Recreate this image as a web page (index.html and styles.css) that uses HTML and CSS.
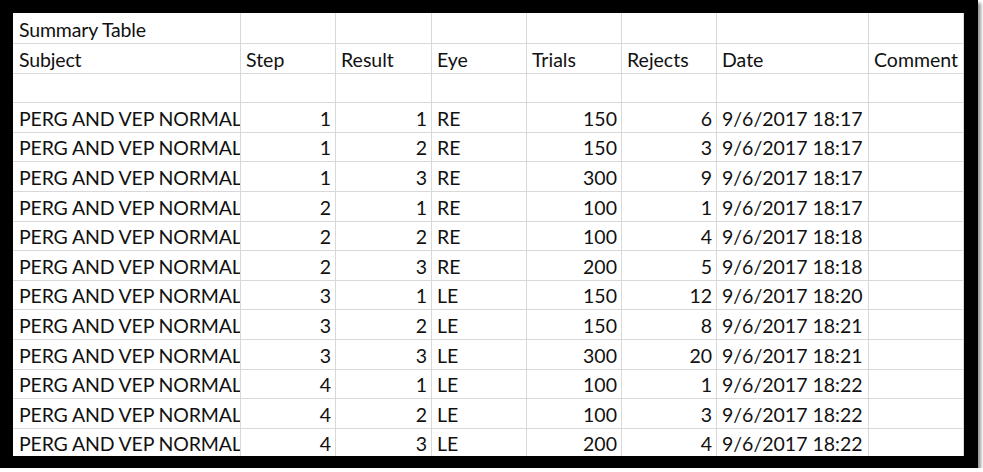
FILE: index.html
```html
<!DOCTYPE html>
<html>
<head>
<meta charset="utf-8">
<link rel="stylesheet" href="styles.css">
</head>
<body>
<div class="frame">
  <div class="sheet">
    <div class="c a">Summary Table</div><div class="c"></div><div class="c"></div><div class="c"></div><div class="c"></div><div class="c"></div><div class="c"></div><div class="c"></div>
    <div class="c a">Subject</div><div class="c">Step</div><div class="c">Result</div><div class="c">Eye</div><div class="c">Trials</div><div class="c">Rejects</div><div class="c">Date</div><div class="c">Comment</div>
    <div class="c a"></div><div class="c"></div><div class="c"></div><div class="c"></div><div class="c"></div><div class="c"></div><div class="c"></div><div class="c"></div>

    <div class="c a">PERG AND VEP NORMAL</div><div class="c n">1</div><div class="c n">1</div><div class="c">RE</div><div class="c n">150</div><div class="c n">6</div><div class="c">9/6/2017 18:17</div><div class="c"></div>
    <div class="c a">PERG AND VEP NORMAL</div><div class="c n">1</div><div class="c n">2</div><div class="c">RE</div><div class="c n">150</div><div class="c n">3</div><div class="c">9/6/2017 18:17</div><div class="c"></div>
    <div class="c a">PERG AND VEP NORMAL</div><div class="c n">1</div><div class="c n">3</div><div class="c">RE</div><div class="c n">300</div><div class="c n">9</div><div class="c">9/6/2017 18:17</div><div class="c"></div>
    <div class="c a">PERG AND VEP NORMAL</div><div class="c n">2</div><div class="c n">1</div><div class="c">RE</div><div class="c n">100</div><div class="c n">1</div><div class="c">9/6/2017 18:17</div><div class="c"></div>
    <div class="c a">PERG AND VEP NORMAL</div><div class="c n">2</div><div class="c n">2</div><div class="c">RE</div><div class="c n">100</div><div class="c n">4</div><div class="c">9/6/2017 18:18</div><div class="c"></div>
    <div class="c a">PERG AND VEP NORMAL</div><div class="c n">2</div><div class="c n">3</div><div class="c">RE</div><div class="c n">200</div><div class="c n">5</div><div class="c">9/6/2017 18:18</div><div class="c"></div>
    <div class="c a">PERG AND VEP NORMAL</div><div class="c n">3</div><div class="c n">1</div><div class="c">LE</div><div class="c n">150</div><div class="c n">12</div><div class="c">9/6/2017 18:20</div><div class="c"></div>
    <div class="c a">PERG AND VEP NORMAL</div><div class="c n">3</div><div class="c n">2</div><div class="c">LE</div><div class="c n">150</div><div class="c n">8</div><div class="c">9/6/2017 18:21</div><div class="c"></div>
    <div class="c a">PERG AND VEP NORMAL</div><div class="c n">3</div><div class="c n">3</div><div class="c">LE</div><div class="c n">300</div><div class="c n">20</div><div class="c">9/6/2017 18:21</div><div class="c"></div>
    <div class="c a">PERG AND VEP NORMAL</div><div class="c n">4</div><div class="c n">1</div><div class="c">LE</div><div class="c n">100</div><div class="c n">1</div><div class="c">9/6/2017 18:22</div><div class="c"></div>
    <div class="c a">PERG AND VEP NORMAL</div><div class="c n">4</div><div class="c n">2</div><div class="c">LE</div><div class="c n">100</div><div class="c n">3</div><div class="c">9/6/2017 18:22</div><div class="c"></div>
    <div class="c a">PERG AND VEP NORMAL</div><div class="c n">4</div><div class="c n">3</div><div class="c">LE</div><div class="c n">200</div><div class="c n">4</div><div class="c">9/6/2017 18:22</div><div class="c"></div>
  </div>
</div>
</body>
</html>
```

FILE: styles.css
```css
html, body {
  margin: 0;
  padding: 0;
  background: #ffffff;
}

.frame {
  width: 951px;
  height: 443px;
  border-style: solid;
  border-color: #000000;
  border-width: 13px 14px 12px 13px;
  background: #ffffff;
  overflow: hidden;
  box-shadow: 3px 3px 3px #9a9a9a;
}

.sheet {
  display: grid;
  grid-template-columns: 228px 95px 96px 95px 95px 95px 152px 95px;
  grid-template-rows: 31px 30px 29px 30px 29px 30px 30px 29px 30px 29px 30px 30px 29px 30px 29px;
  font-family: Lato, "Open Sans", sans-serif;
  font-size: 19.5px;
  color: #111111;
}

.c {
  box-sizing: border-box;
  border-right: 1px solid #d9d9d9;
  border-bottom: 1px solid #d9d9d9;
  display: flex;
  align-items: flex-end;
  padding: 0 4px 3px 5px;
  line-height: 20px;
  white-space: nowrap;
  overflow: hidden;
}

.c.a {
  padding-left: 6px;
  padding-right: 0;
  letter-spacing: -0.15px;
}

.c.n {
  justify-content: flex-end;
}
```
